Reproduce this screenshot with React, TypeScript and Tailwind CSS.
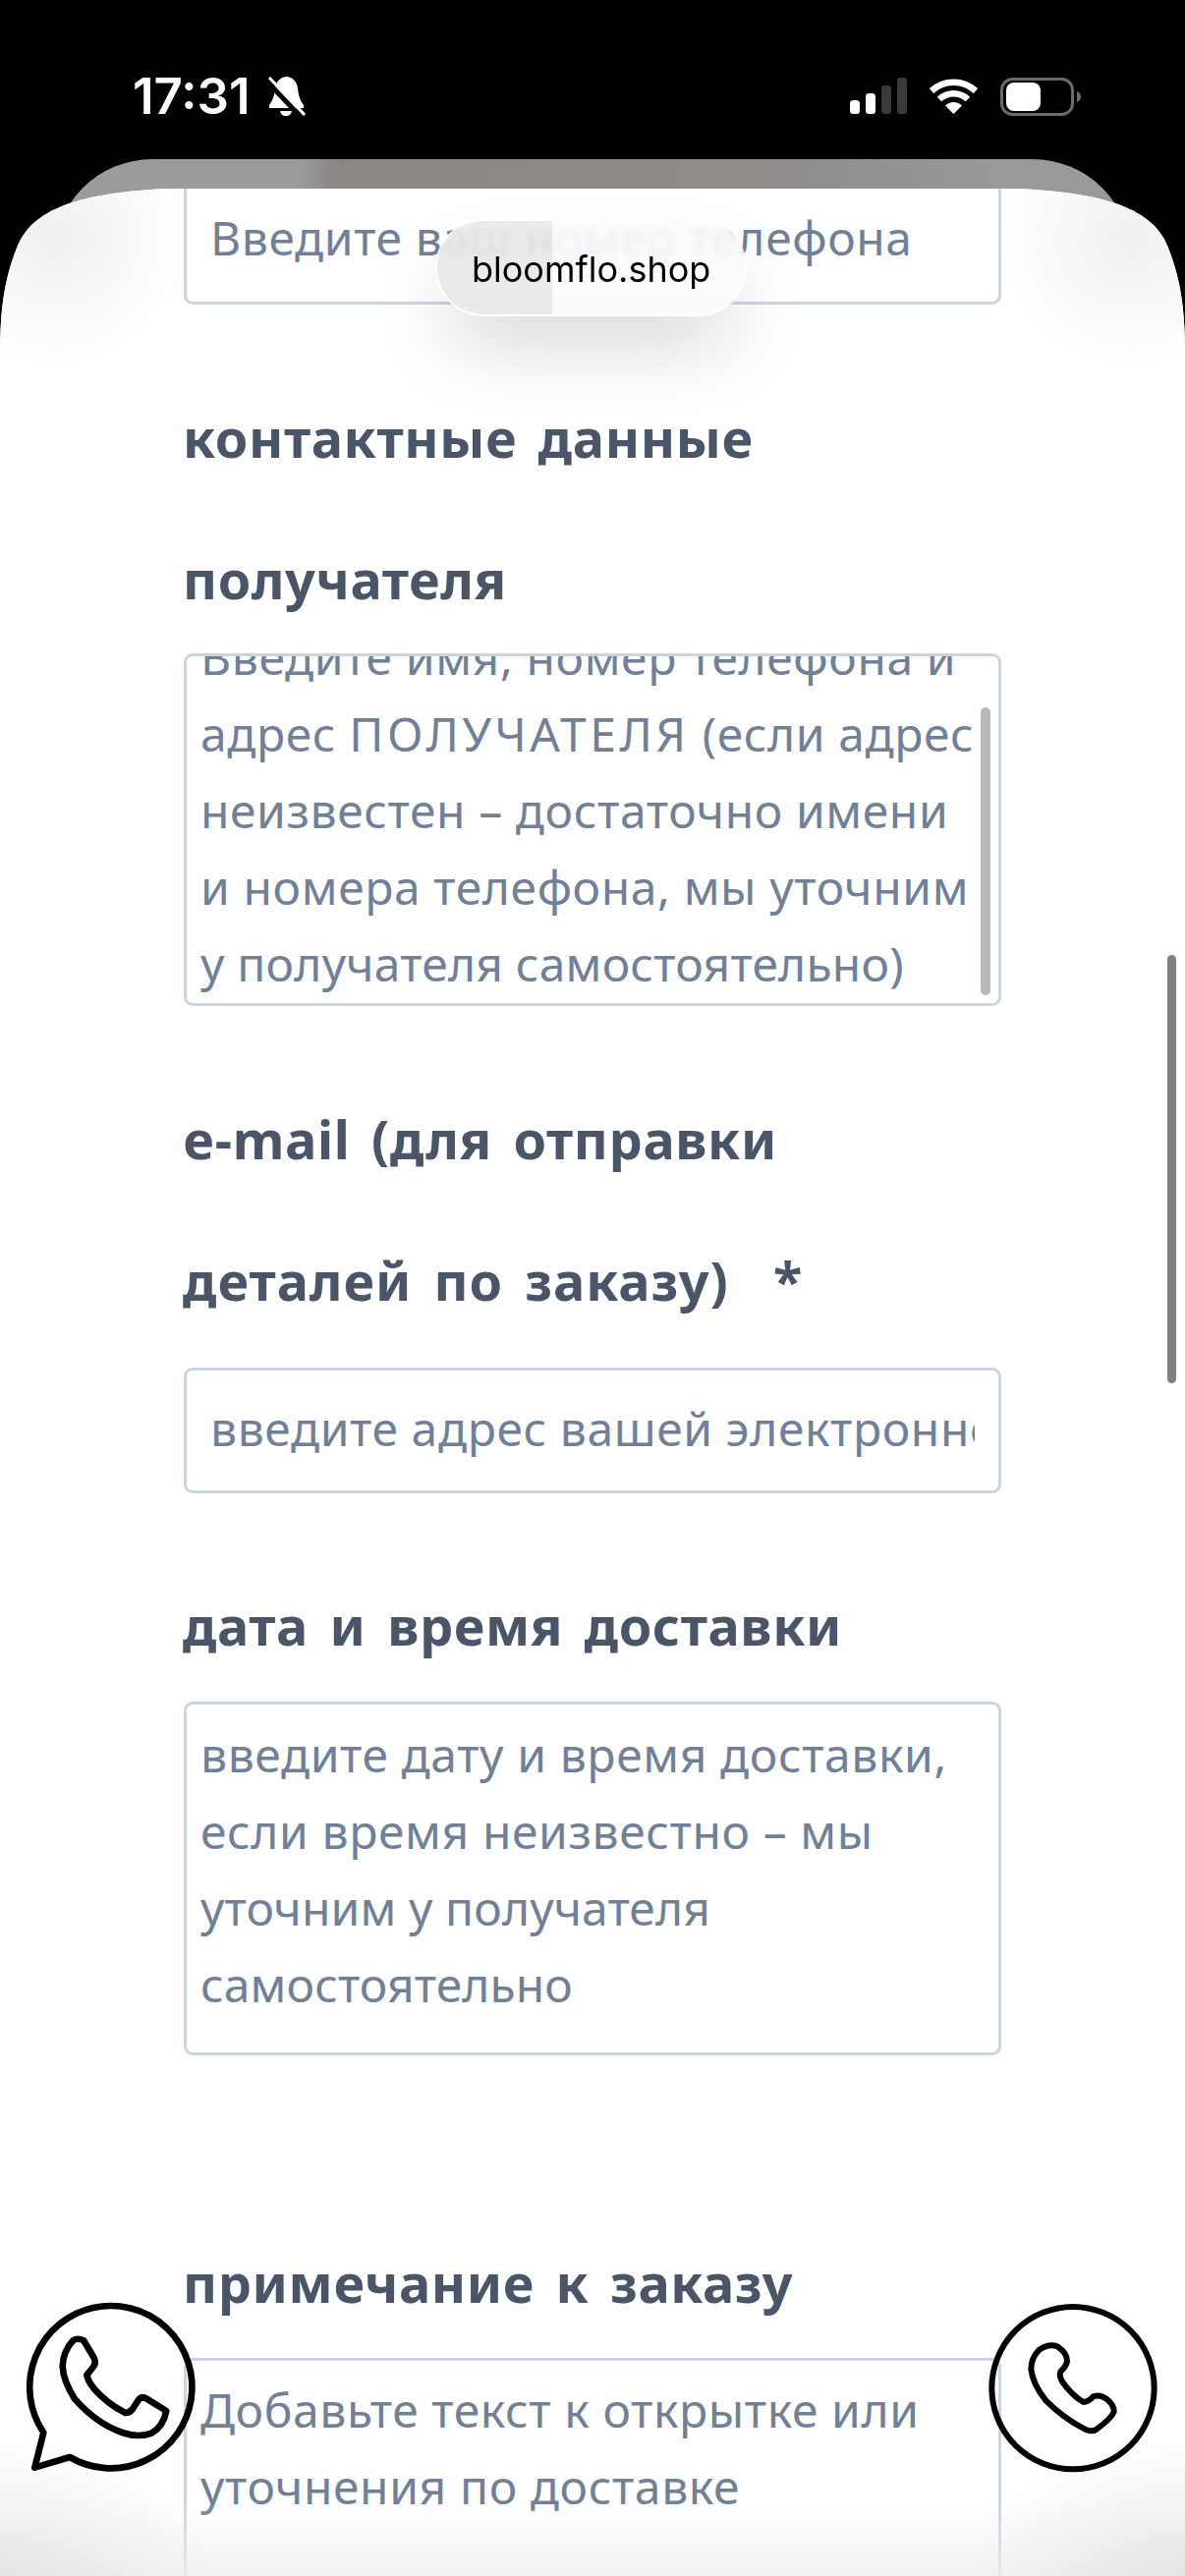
import type { ReactNode } from 'react';

function BellOff() {
  return (
    <svg width="39" height="42" viewBox="0 0 39 42" className="ml-[17px]">
      <path d="M19 1C26 1 30 6 31 13C32 20 33 25 37 30V33H2V30C6 25 7 20 8 13C9 6 13 2 19 1Z" fill="#fff" />
      <path d="M13 36H25C24 40 22 41 19 41C16 41 14 40 13 36Z" fill="#fff" />
      <line x1="0" y1="6" x2="34" y2="42" stroke="#000" strokeWidth="5" />
      <line x1="2" y1="2" x2="38" y2="40" stroke="#fff" strokeWidth="3" />
    </svg>
  );
}

function Signal() {
  return (
    <svg width="58" height="37" viewBox="0 0 58 37">
      <rect x="0" y="23" width="10" height="14" rx="3.5" fill="#fff" />
      <rect x="16" y="16" width="10" height="21" rx="3.5" fill="#fff" />
      <rect x="32" y="8" width="10" height="29" rx="3.5" fill="#3a3a3a" />
      <rect x="48" y="0" width="10" height="37" rx="3.5" fill="#3a3a3a" />
    </svg>
  );
}

function Wifi() {
  return (
    <svg width="51" height="37" viewBox="0 0 51 37" className="ml-[22px]">
      <path d="M3 13.5A33 33 0 0 1 48 13.5" fill="none" stroke="#fff" strokeWidth="6.5" />
      <path d="M11 22A21 21 0 0 1 40 22" fill="none" stroke="#fff" strokeWidth="6.5" />
      <path d="M25.5 37L17 28.5A12 12 0 0 1 34 28.5Z" fill="#fff" />
    </svg>
  );
}

function Battery() {
  return (
    <svg width="82" height="39" viewBox="0 0 82 39" className="ml-[22px]">
      <rect x="1.5" y="1.5" width="72" height="36" rx="11" fill="none" stroke="#6b6b6b" strokeWidth="3" />
      <rect x="6" y="5" width="35" height="29" rx="8" fill="#fff" />
      <path d="M78 14C81 15 82 17 82 19.500C82 22 81 24 78 25Z" fill="#6b6b6b" />
    </svg>
  );
}

function WhatsAppIcon() {
  return (
    <svg width="220" height="220" viewBox="0 0 660 660" fill="none" stroke="#000" strokeWidth="20" strokeLinejoin="round">
      <path d="M130 468L103 575L210 543A248 248 0 1 0 130 468Z" />
      <path d="M220 187Q232 178 252 186L284 240Q292 258 280 270L262 292Q265 310 285 335Q325 380 380 408Q392 408 402 396L420 368Q430 355 445 365L505 402Q495 450 460 470Q420 485 370 468Q290 440 225 365Q190 310 188 265Q190 220 220 187Z" />
    </svg>
  );
}

function CallIcon() {
  return (
    <svg width="220" height="220" viewBox="0 0 660 660" fill="none" stroke="#000" strokeWidth="18" strokeLinejoin="round">
      <circle cx="318" cy="332" r="248" />
      <path d="M215 215Q245 195 270 205Q300 225 300 250Q298 265 280 282Q275 295 285 312Q315 355 350 375Q365 375 380 358Q400 350 420 365Q445 385 443 405Q435 425 390 458Q375 468 355 458Q290 425 235 370Q195 320 190 275Q190 240 215 215Z" />
    </svg>
  );
}

function Heading({ children, className = '' }: { children: ReactNode; className?: string }) {
  return (
    <h2 className={`-ml-[1px] pb-[3px] text-[54px] font-bold leading-[144px] tracking-[0.6px] text-[#4a5568] [word-spacing:7px] ${className}`}>
      {children}
    </h2>
  );
}

function TextBox({ lines, className = '', innerClassName = '', children }: { lines: ReactNode[]; className?: string; innerClassName?: string; children?: ReactNode }) {
  return (
    <div className={`relative h-[360px] overflow-hidden rounded-[9px] border-[3px] border-[#cbd5e0] px-[14px] text-[48px] leading-[78px] tracking-[0.6px] text-[#718096] ${className}`}>
      <div className={innerClassName}>
        {lines.map((line, i) => (
          <div key={i} className="whitespace-nowrap">{line}</div>
        ))}
      </div>
      {children}
    </div>
  );
}

function TextInput({ text, className = '' }: { text: string; className?: string }) {
  return (
    <div className={`flex items-center rounded-[9px] border-[3px] border-[#cbd5e0] px-[24px] text-[48px] tracking-[0.6px] text-[#718096] ${className}`}>
      <div className="overflow-hidden whitespace-nowrap">{text}</div>
    </div>
  );
}

export default function App() {
  return (
    <div className="relative flex h-[2622px] w-[1206px] flex-col overflow-hidden bg-black font-['Noto_Sans',sans-serif]">
      {/* status bar */}
      <div className="flex h-[162px] shrink-0 items-start justify-between pl-[135px] pr-[106px] pt-[77px]">
        <div className="flex items-start">
          <span className="font-['Inter',sans-serif] text-[51px] font-semibold leading-[42px] text-white">17:31</span>
          <BellOff />
        </div>
        <div className="flex items-start pt-[2px]">
          <Signal />
          <Wifi />
          <Battery />
        </div>
      </div>

      {/* sheet behind */}
      <div className="mx-[55px] h-[120px] shrink-0 rounded-t-[100px] bg-[linear-gradient(90deg,#9b9b9b_0%,#9b9b9b_23%,#8b8583_26%,#8f8987_50%,#8f8d8b_70%,#9a9896_85%,#9b9b9b_100%)]" />

      {/* current page */}
      <div className="relative -mt-[90px] flex-1 overflow-hidden bg-white [clip-path:path('M0_170C0_120_5_90_18_58C30_30_60_5_170_0H1036C1146_5_1176_30_1188_58C1201_90_1206_120_1206_170V2430H0Z')]">
        <div className="pointer-events-none absolute left-0 top-0 h-[220px] w-[220px] bg-[radial-gradient(circle_130px_at_55px_50px,#efefef_0%,#ffffff_100%)]" />
        <div className="pointer-events-none absolute right-0 top-0 h-[220px] w-[220px] bg-[radial-gradient(circle_130px_at_165px_50px,#efefef_0%,#ffffff_100%)]" />

        <form className="relative mx-[187px] -mt-[9px] w-[832px]">
          <TextInput className="h-[127px] pb-[10px]" text="Введите ваш номер телефона" />

          <Heading className="mt-[63px]">
            контактные данные
            <br />
            получателя
          </Heading>
          <TextBox
            className="mt-[1px] !h-[359px]"
            innerClassName="-mt-[38px]"
            lines={[
              'Введите имя, номер телефона и',
              <>
                адрес <span className="tracking-[3.500px]">ПОЛУЧАТЕЛЯ</span> (если адрес
              </>,
              'неизвестен – достаточно имени',
              'и номера телефона, мы уточним',
              <span className="tracking-[0.2px]">у получателя самостоятельно)</span>,
            ]}
          >
            <div className="absolute right-[8px] top-[52px] h-[293px] w-[10px] rounded-full bg-[#b9b9b9]" />
          </TextBox>

          <Heading className="mt-[63px]">
            e-mail (для отправки
            <br />
            <span className="tracking-[1px]">деталей по заказу)</span>
            <span className="ml-[45px]">*</span>
          </Heading>
          <TextInput className="mt-[14px] h-[128px] pb-[4px]" text="введите адрес вашей электронной почты" />

          <Heading className="mt-[62px]">дата и время доставки</Heading>
          <TextBox
            className="mt-[3px]"
            innerClassName="pt-[12px]"
            lines={[
              'введите дату и время доставки,',
              'если время неизвестно – мы',
              <span className="tracking-[0.1px]">уточним у получателя</span>,
              <span className="tracking-[0.1px]">самостоятельно</span>,
            ]}
          />

          <Heading className="mt-[159px]">примечание к заказу</Heading>
          <TextBox
            className="mt-[2px] !h-[400px]"
            innerClassName="pt-[11px]"
            lines={['Добавьте текст к открытке или', 'уточнения по доставке']}
          />
        </form>

        <div className="pointer-events-none absolute inset-x-0 bottom-0 h-[75px] bg-[linear-gradient(180deg,rgba(240,240,240,0)_0%,rgba(238,238,238,0.75)_100%)]" />
        <div className="pointer-events-none absolute bottom-0 left-0 h-[140px] w-[220px] bg-[radial-gradient(ellipse_220px_140px_at_0_100%,rgba(226,226,226,0.8)_0%,rgba(240,240,240,0)_100%)]" />
        <div className="pointer-events-none absolute bottom-0 right-0 h-[140px] w-[220px] bg-[radial-gradient(ellipse_220px_140px_at_100%_100%,rgba(226,226,226,0.8)_0%,rgba(240,240,240,0)_100%)]" />
      </div>

      {/* browser address pill */}
      <div className="absolute left-[443px] top-[223px] flex h-[99px] w-[317px] items-center justify-center overflow-hidden rounded-[50px] border-[2px] border-white/70 shadow-[0_40px_80px_-10px_rgba(0,0,0,0.16)] backdrop-blur-[3px]">
        <div className="h-full w-[117px] bg-[#e8e8e8]/90" />
        <div className="h-full flex-1 bg-[#fbfbfb]/90" />
        <span className="absolute left-[35px] top-[26px] font-['Inter',sans-serif] text-[36px] leading-[46px] text-black">bloomflo.shop</span>
      </div>

      {/* page scrollbar */}
      <div className="absolute left-[1188px] top-[972px] h-[436px] w-[9px] rounded-full bg-[#7f7f7f]" />

      {/* floating buttons */}
      <div className="absolute left-[1px] top-[2320px]"><WhatsAppIcon /></div>
      <div className="absolute left-[986px] top-[2320px]"><CallIcon /></div>
    </div>
  );
}
